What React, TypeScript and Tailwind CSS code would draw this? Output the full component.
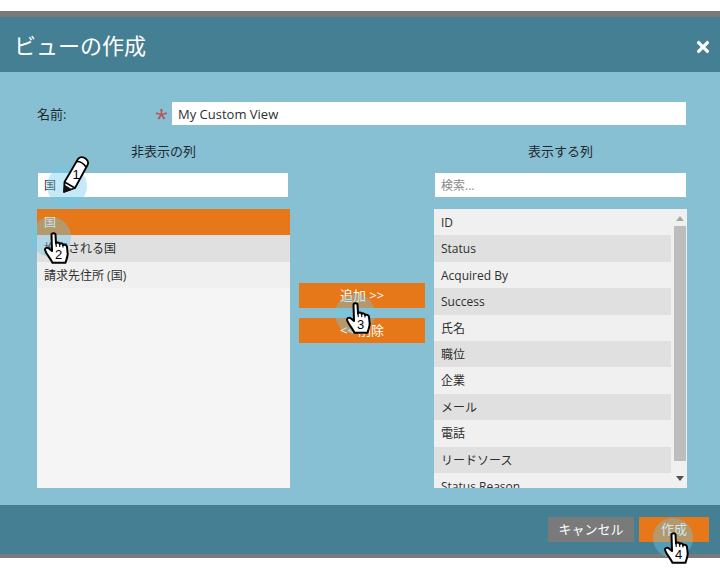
import React from "react";
import { FaTimes } from "react-icons/fa";

const font = "font-['Open_Sans','Noto_Sans_CJK_JP',sans-serif]";
const right = ["ID", "Status", "Acquired By", "Success", "氏名", "職位", "企業", "メール", "電話", "リードソース", "Status Reason"];

function Row({ label, even, active }: { label: string; even?: boolean; active?: boolean }) {
  return (
    <div className={`h-[26.4px] shrink-0 pl-[7px] text-[12px] leading-[28px] ${active ? "bg-[#e7781a] text-[#f5f5f5]" : even ? "bg-[#e0e0e0] text-[#2f2f2f]" : "bg-[#f0f0f0] text-[#2f2f2f]"}`}>
      {label}
    </div>
  );
}

function Hand({ n, x, y }: { n: number; x: number; y: number }) {
  return (
    <div className="absolute h-[32px] w-[25px]" style={{ left: x, top: y }}>
      <svg width="25" height="32" viewBox="0 0 25 32">
        <path
          d="M7.5 2.8C7.5 .6 11.5 .6 11.5 2.8L12 11.5C13 10 15.4 10.3 15.6 12C16.6 10.8 18.7 11.2 18.9 13C20.2 12.3 22.7 12.8 23 15L23.7 21.5C23.7 25.5 22.2 27.5 21.5 30.8L8.5 30.8C7 27 2.8 23 1.2 18.5C.5 16.3 2.8 14.8 4.7 16.3L8 19Z"
          fill="#fff"
          stroke="#000"
          strokeWidth="2"
          strokeLinejoin="round"
        />
        <path d="M12 11.5L12.3 15M15.6 12L15.8 15M18.9 13L19 15.5" fill="none" stroke="#000" strokeWidth="1.1" />
      </svg>
      <span className="absolute left-[8px] top-[15px] w-[13px] text-center font-['Liberation_Sans',sans-serif] text-[13px] leading-[15px] text-black">{n}</span>
    </div>
  );
}

function Circle({ x, y }: { x: number; y: number }) {
  return <div className="absolute h-[40px] w-[40px] rounded-full bg-[#6fc8ea]/40" style={{ left: x, top: y }} />;
}

export default function App() {
  return (
    <div className={`relative h-[585px] w-[720px] overflow-hidden bg-white pt-[11px] ${font}`}>
      <div className="flex h-[547px] flex-col border-t-[6px] border-b-[4px] border-t-[#7a7a7a] border-b-[#7a7a7a] bg-[#88c0d3]">
        <div className="flex h-[55px] shrink-0 items-center justify-between bg-[#457f93] pl-[14px] pr-[8px]">
          <span className="pt-[2px] text-[22px] text-white">ビューの作成</span>
          <FaTimes className="mt-[5px] text-[18px] text-white" />
        </div>

        <div className="flex h-[433px] shrink-0 flex-col px-[37px] pt-[30px]">
          <div className="flex h-[23px] items-center text-[13px] text-[#1f2a2e]">
            <span className="w-[118px] shrink-0 pt-[2px]">名前:</span>
            <span className="w-[17px] shrink-0 pt-[8px] text-[24px] leading-none text-[#b5545c]">*</span>
            <div className="flex h-[23px] w-[514px] shrink-0 items-center bg-white pl-[6px] pt-[2px] text-[#2f2f2f]">My Custom View</div>
          </div>

          <div className="mt-[17px] flex items-start">
            <div className="flex w-[253px] shrink-0 flex-col">
              <div className="h-[18px] text-center text-[13px] leading-[19px] text-[#1f2a2e]">非表示の列</div>
              <div className="mx-px mt-[13px] flex h-[24px] w-[250px] items-center bg-white pl-[6px] pt-[2px] text-[12px] text-[#2f2f2f]">国</div>
              <div className="mt-[12px] flex h-[279px] flex-col bg-[#f5f5f5]">
                <Row label="国" active />
                <Row label="推定される国" even />
                <Row label="請求先住所 (国)" />
              </div>
            </div>

            <div className="mt-[141px] flex w-[144px] shrink-0 flex-col items-center gap-[10px] text-[13px] text-white">
              <div className="flex h-[25px] w-[126px] items-center justify-center bg-[#e7781a]">追加 &gt;&gt;</div>
              <div className="flex h-[25px] w-[126px] items-center justify-center bg-[#e7781a]">&lt;&lt; 削除</div>
            </div>

            <div className="flex w-[253px] shrink-0 flex-col">
              <div className="h-[18px] text-center text-[13px] leading-[19px] text-[#1f2a2e]">表示する列</div>
              <div className="mx-px mt-[13px] flex h-[24px] w-[251px] items-center bg-white pl-[6px] pt-[2px] text-[12px] text-[#8a8a8a]">検索...</div>
              <div className="mt-[12px] flex h-[279px] overflow-hidden bg-[#f0f0f0]">
                <div className="flex w-[237px] shrink-0 flex-col">
                  {right.map((r, i) => (
                    <Row key={r} label={r} even={i % 2 === 1} />
                  ))}
                </div>
                <div className="flex w-[16px] flex-col items-center pl-px">
                  <svg className="mt-[7px]" width="8" height="5" viewBox="0 0 8 5"><path d="M0 5L4 0L8 5Z" fill="#a8a8a8" /></svg>
                  <div className="mt-[5px] h-[235px] w-[12px] bg-[#bdbdbd]" />
                  <svg className="mt-[15px]" width="8" height="5" viewBox="0 0 8 5"><path d="M0 0L8 0L4 5Z" fill="#505050" /></svg>
                </div>
              </div>
            </div>
          </div>
        </div>

        <div className="flex flex-1 items-center justify-end gap-[5px] bg-[#457f93] pr-[11px] text-[13px] text-white">
          <div className="flex h-[25px] w-[86px] items-center justify-center bg-[#7a7a7a]">キャンセル</div>
          <div className="flex h-[25px] w-[70px] items-center justify-center bg-[#e7781a]">作成</div>
        </div>
      </div>

      <Circle x={47} y={166} />
      <Circle x={31} y={217} />
      <Circle x={335} y={294} />
      <Circle x={653} y={518} />

      <div className="absolute left-[62px] top-[155px] h-[40px] w-[28px]">
        <svg width="28" height="40" viewBox="0 0 28 40">
          <path d="M2 37L2.5 27L16 4C17.5 1.5 21 1.5 23.5 3.5C26 5.5 27 7.5 25.5 10L13 33Z" fill="#fff" stroke="#000" strokeWidth="1.8" strokeLinejoin="round" />
          <path d="M2 37L3 30.5L9.5 34.5Z" fill="#111" stroke="#111" strokeWidth="1" />
          <path d="M2.5 27L13 33" stroke="#000" strokeWidth="1.6" />
          <path d="M15 6.5C18 6.5 22 9 24 12" fill="none" stroke="#000" strokeWidth="1.5" />
        </svg>
        <span className="absolute left-[8px] top-[12px] w-[12px] text-center font-['Liberation_Sans',sans-serif] text-[13px] leading-[15px] text-black">1</span>
      </div>
      <Hand n={2} x={44} y={232} />
      <Hand n={3} x={346} y={302} />
      <Hand n={4} x={664} y={532} />
    </div>
  );
}
